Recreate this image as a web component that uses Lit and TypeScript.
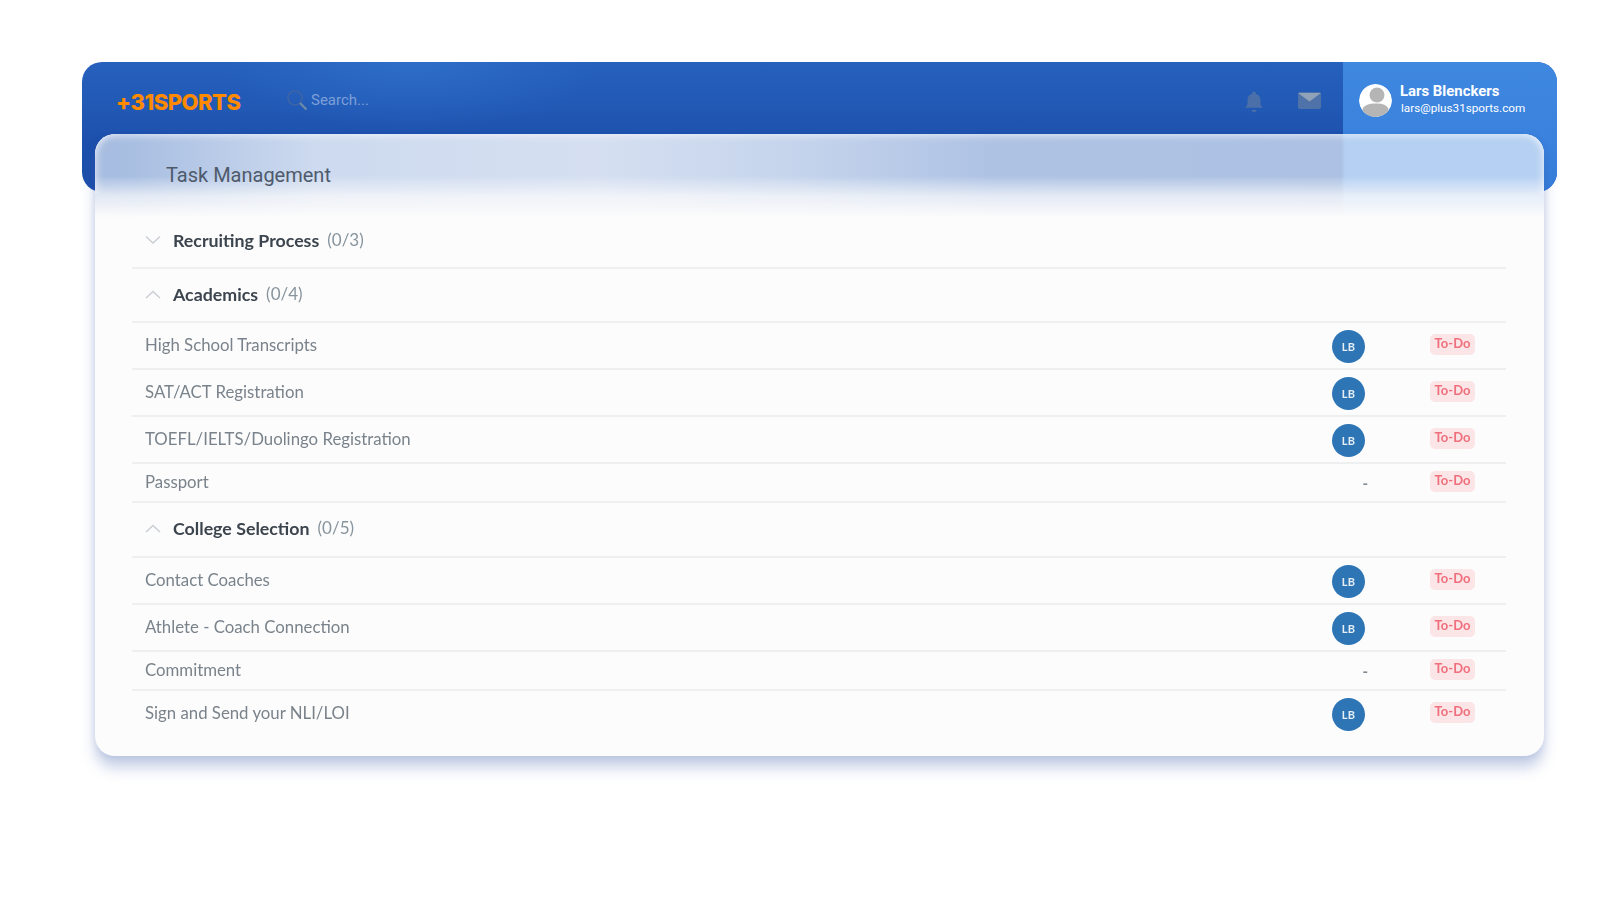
import { LitElement, html, css, svg } from "lit";
import { customElement } from "lit/decorators.js";

type Row = { name: string; who: boolean; h: string };
type Group = { title: string; count: string; open: boolean; h: string; rows: Row[] };

const groups: Group[] = [
  { title: "Recruiting Process", count: "(0/3)", open: false, h: "hg1", rows: [] },
  {
    title: "Academics", count: "(0/4)", open: true, h: "hg2",
    rows: [
      { name: "High School Transcripts", who: true, h: "tall" },
      { name: "SAT/ACT Registration", who: true, h: "tall" },
      { name: "TOEFL/IELTS/Duolingo Registration", who: true, h: "tall" },
      { name: "Passport", who: false, h: "short" },
    ],
  },
  {
    title: "College Selection", count: "(0/5)", open: true, h: "hg3",
    rows: [
      { name: "Contact Coaches", who: true, h: "tall" },
      { name: "Athlete - Coach Connection", who: true, h: "tall" },
      { name: "Commitment", who: false, h: "short" },
      { name: "Sign and Send your NLI/LOI", who: true, h: "last" },
    ],
  },
];

@customElement("app-root")
export class AppRoot extends LitElement {
  static styles = css`
    :host { display: block; width: 1600px; height: 900px; background: #fff; overflow: hidden; font-family: "Lato", sans-serif; }
    .stage { padding: 62px 43px 0 82px; }
    .header {
      height: 130px; border-radius: 20px; display: flex; overflow: hidden;
      background:
        radial-gradient(ellipse 190px 70px at 330px 0, rgba(58,130,220,.38), rgba(58,130,220,0)),
        linear-gradient(180deg, #2661bc 0%, #2159b5 35%, #1d50ac 62%, #1c4fab 100%);
    }
    .brand { display: flex; align-items: flex-start; flex: 1; padding: 29px 0 0 34px; }
    .logo { font: 800 22px/22px "Inter", sans-serif; color: #ff8a00; letter-spacing: -0.5px; width: 170px; }
    .search { display: flex; align-items: center; gap: 3px; height: 22px; margin-top: -2px; color: #7d9fd8; font: 400 15px/20px "Roboto", sans-serif; }
    .tools { display: flex; gap: 33px; padding: 28px 22px 0 0; height: 24px; }
    .profile {
      width: 214px; padding: 21px 0 0 16px; box-sizing: border-box; display: flex; gap: 8px;
      background: linear-gradient(180deg, #3f88e0 0%, #367edb 100%); color: #fff;
    }
    .avatar { width: 33px; height: 33px; border-radius: 50%; display: block; margin-top: 1px; }
    .pname { font: 700 14.9px/17px "Roboto", sans-serif; }
    .pmail { font: 400 11.7px/15px "Roboto", sans-serif; margin-top: 1px; margin-left: 1px; }
    .card {
      position: relative; margin: -58px 13px 0; height: 622px; border-radius: 20px; box-sizing: border-box;
      background: #fcfcfc;
      box-shadow: 0 12px 14px rgba(56, 90, 170, .28), 0 2px 6px rgba(56, 90, 170, .12);
      padding: 0 38px 0 37px;
    }
    .glass {
      position: absolute; left: 0; right: 0; top: 0; height: 84px; border-radius: 20px 20px 0 0;
      background: linear-gradient(90deg, #a6bce0 0, #a9bfe2 40px, #cddaef 220px, #d5dff1 500px, #c5d4ec 700px, #aec2e4 900px, #acc1e3 1246px, #b5d0f2 1250px, #b5d0f2 100%);
      -webkit-mask-image: linear-gradient(180deg, #000 0, #000 42px, rgba(0,0,0,.3) 62px, transparent 84px);
      mask-image: linear-gradient(180deg, #000 0, #000 42px, rgba(0,0,0,.3) 62px, transparent 84px);
    }
    .rim { position: absolute; inset: 0 0 auto 0; height: 60px; border-radius: 20px 20px 0 0; box-shadow: inset 0 5px 6px -2px rgba(255,255,255,.45), inset 8px 0 8px -6px rgba(255,255,255,.5), inset -8px 0 8px -6px rgba(255,255,255,.5); }
    h1 { position: relative; margin: 0; padding: 0 0 0 34px; height: 75px; font: 400 20px/82px "Roboto", sans-serif; color: #4e5a6b; }
    .ghead { display: flex; align-items: center; border-bottom: 2px solid #eeeff1; box-sizing: border-box; padding-left: 13px; position: relative; }
    .hg1 { height: 60px; padding-top: 3px; }
    .hg2 { height: 54px; padding-bottom: 2px; }
    .hg3 { height: 55px; padding-bottom: 3px; }
    .chev { width: 16px; height: 9px; margin-right: 12px; display: block; }
    .gtitle { font: 700 17.8px/22px "Lato", sans-serif; color: #3c444e; margin-right: 8px; }
    .gcount { font: 400 17px/22px "Lato", sans-serif; color: #87949d; }
    .row { display: flex; align-items: center; border-bottom: 2px solid #eeeff1; box-sizing: border-box; padding-left: 13px; font: 400 16.8px/22px "Lato", sans-serif; color: #7a838b; }
    .name { flex: 1; margin-top: -1px; }
    .tall { height: 47px; }
    .short { height: 39px; }
    .last { height: 44px; border-bottom: 0; }
    .who { width: 33px; display: flex; justify-content: center; margin-right: 65px; }
    .lb {
      width: 33px; height: 33px; border-radius: 50%; background: #2d75b5; color: #e6eef6;
      font: 700 11px/33px "Lato", sans-serif; text-align: center; letter-spacing: .3px; margin-top: 2px;
    }
    .dash { color: #808890; font-size: 15px; width: 33px; text-align: right; margin-right: -6px; font-weight: 700; }
    .todo {
      width: 45px; height: 21px; border-radius: 5px; background: #fce5e7; color: #ef6f7c;
      font: 700 13px/19px "Lato", sans-serif; text-align: center; margin-right: 31px; margin-top: -2px;
    }
    .content { filter: blur(.35px); position: relative; }
  `;

  private chev(open: boolean) {
    const d = open ? "M1 8 L8 1.500 L15 8" : "M1 1.500 L8 8 L15 1.500";
    return html`<svg class="chev" viewBox="0 0 16 9" fill="none" stroke="#c9ced3" stroke-width="1.4">${svg`<path d=${d}></path>`}</svg>`;
  }

  render() {
    return html`
      <div class="stage">
        <div class="header">
          <div class="brand">
            <div class="logo">+31SPORTS</div>
            <div class="search">
              <svg width="22" height="22" viewBox="0 0 22 22" fill="none">
                <circle cx="9" cy="9" r="7" stroke="#3f64a6" stroke-width="1.6"></circle>
                <path d="M14 14 L20.500 20.500" stroke="#6f8aa8" stroke-width="2.2"></path>
              </svg>
              <span>Search...</span>
            </div>
          </div>
          <div class="tools">
            <svg width="22" height="24" viewBox="0 0 22 24">
              <path fill="#4a6fa9" d="M11 1.500c1.100 0 1.900.8 1.900 1.900v.4c3 .8 4.600 3.300 4.600 6.400v4.400l2.300 3.200H2.200l2.300-3.200v-4.400c0-3.100 1.600-5.600 4.600-6.400v-.4c0-1.100.8-1.900 1.900-1.900z"></path>
              <path fill="#4a6fa9" d="M8.500 20h5c-.4 1.400-1.300 2.200-2.500 2.200S8.900 21.400 8.500 20z"></path>
            </svg>
            <svg width="23" height="18" viewBox="0 0 23 18" style="margin-top:2px">
              <rect width="23" height="17" rx="2" fill="#4f72a8"></rect>
              <path d="M0 1 L11.500 9.500 L23 1 Z" fill="#90a2b8"></path>
            </svg>
          </div>
          <div class="profile">
            <svg class="avatar" viewBox="0 0 33 33">
              <circle cx="16.500" cy="16.500" r="16.500" fill="#fff"></circle>
              <circle cx="18" cy="11" r="7.500" fill="#b5b5b5"></circle>
              <path d="M3 27 C4 21 10 19.500 17 19.500 C24 19.500 29 21 30 27 C26 31 21 33 16.500 33 C11 33 6 31 3 27 Z" fill="#b5b5b5"></path>
            </svg>
            <div>
              <div class="pname">Lars Blenckers</div>
              <div class="pmail">lars@plus31sports.com</div>
            </div>
          </div>
        </div>
        <div class="card">
          <div class="glass"></div>
          <div class="rim"></div>
          <h1>Task Management</h1>
          <div class="content">
            ${groups.map(
              (g) => html`
                <div class="ghead ${g.h}">
                  ${this.chev(g.open)}
                  <span class="gtitle">${g.title}</span>
                  <span class="gcount">${g.count}</span>
                </div>
                ${g.rows.map(
                  (r) => html`
                    <div class="row ${r.h}">
                      <span class="name">${r.name}</span>
                      <div class="who">${r.who ? html`<div class="lb">LB</div>` : html`<div class="dash">-</div>`}</div>
                      <div class="todo">To-Do</div>
                    </div>
                  `
                )}
              `
            )}
          </div>
        </div>
      </div>
    `;
  }
}
